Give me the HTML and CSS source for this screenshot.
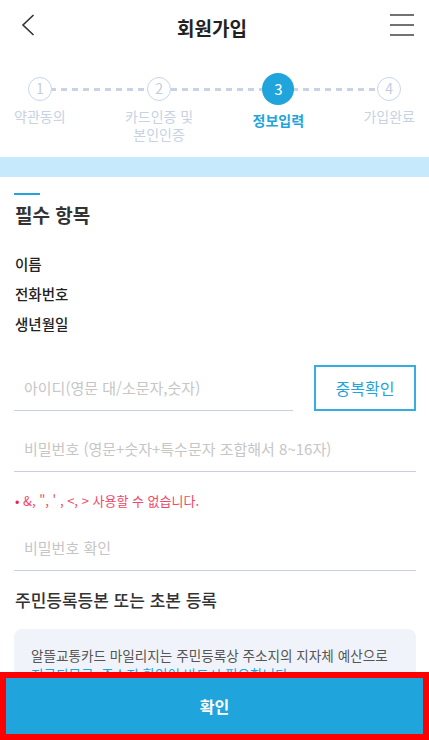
FILE: index.html
```html
<!doctype html>
<html lang="ko">
<head>
  <meta charset="UTF-8">
  <title>회원가입</title>
  <link rel="stylesheet" href="styles.css">
</head>
<body>
<div class="header">
  <a href="#" class="back">
    <svg width="14" height="22" viewBox="0 0 14 22"><path d="M12.5 1 L2 11 L12.5 21" fill="none" stroke="#333" stroke-width="1.6"/></svg>
  </a>
  <h1 class="title">회원가입</h1>
  <a href="#" class="menu">
    <svg width="26" height="22" viewBox="0 0 26 22"><path d="M1 1h24M1 11h24M1 21h24" fill="none" stroke="#444" stroke-width="1.6"/></svg>
  </a>
</div>

<div class="steps">
  <div class="step">
    <div class="dot-wrap"><span class="dot">1</span></div>
    <div class="step-label">약관동의</div>
  </div>
  <div class="step">
    <div class="dot-wrap"><span class="dot">2</span></div>
    <div class="step-label">카드인증 및<br>본인인증</div>
  </div>
  <div class="step on">
    <div class="dot-wrap"><span class="dot">3</span></div>
    <div class="step-label">정보입력</div>
  </div>
  <div class="step">
    <div class="dot-wrap"><span class="dot">4</span></div>
    <div class="step-label">가입완료</div>
  </div>
</div>

<div class="band"></div>

<div class="content">
  <div class="sec-bar"></div>
  <h2 class="sec-title">필수 항목</h2>

  <ul class="info">
    <li>이름</li>
    <li>전화번호</li>
    <li>생년월일</li>
  </ul>

  <div class="row">
    <input class="field" type="text" placeholder="아이디(영문 대/소문자,숫자)">
    <button class="btn-check">중복확인</button>
  </div>
  <div class="row row-pw">
    <input class="field" type="password" placeholder="비밀번호 (영문+숫자+특수문자 조합해서 8~16자)">
  </div>
  <p class="warn"><span class="bullet">•</span> &amp;, ", ' , &lt;, &gt; 사용할 수 없습니다.</p>
  <div class="row">
    <input class="field" type="password" placeholder="비밀번호 확인">
  </div>

  <h3 class="sub-title">주민등록등본 또는 초본 등록</h3>
  <div class="notice">
    알뜰교통카드 마일리지는 주민등록상 주소지의 지자체 예산으로<br>
    <span class="blue">지급되므로, 주소지 확인이 반드시 필요합니다.</span>
  </div>
</div>

<a href="#" class="btn-ok">확인</a>
</body>
</html>
```

FILE: styles.css
```css
* {
  box-sizing: border-box;
}
body {
  margin: 0;
  font-family: "Noto Sans CJK KR", "Noto Sans", sans-serif;
  color: #222;
  background: #fff;
}
.header {
  height: 54px;
  display: flex;
  align-items: center;
  justify-content: space-between;
  padding: 0 14px 0 21px;
}
.header a {
  display: flex;
  margin-bottom: 4px;
}
.title {
  margin: 0;
  font-size: 19px;
  font-weight: 700;
  color: #222;
}
.steps {
  position: relative;
  display: flex;
  justify-content: space-between;
  padding: 19px 14px 0;
}
.steps::before {
  content: "";
  position: absolute;
  left: 39px;
  right: 37px;
  top: 33.5px;
  height: 3px;
  background: repeating-linear-gradient(90deg, #c8d3e7 0 6px, transparent 6px 11px);
}
.step {
  position: relative;
  display: flex;
  flex-direction: column;
  align-items: center;
}
.dot-wrap {
  height: 32px;
  display: flex;
  align-items: center;
}
.dot {
  width: 24px;
  height: 24px;
  border-radius: 50%;
  border: 1.5px solid #c8d5ea;
  background: #fff;
  color: #c3cde0;
  font-size: 14px;
  line-height: 21px;
  text-align: center;
}
.step-label {
  margin-top: 2px;
  font-size: 14px;
  line-height: 18px;
  color: #c8d2e3;
  text-align: center;
}
.step.on .dot {
  width: 32px;
  height: 32px;
  border: none;
  background: #1fa4db;
  color: #fff;
  font-size: 15px;
  line-height: 32px;
}
.step.on .step-label {
  margin-top: 6px;
  color: #1fa4db;
  font-weight: 700;
}
.band {
  height: 20px;
  margin-top: 14px;
  background: #c6eafb;
}
.content {
  padding: 16px 13px 120px 14px;
}
.sec-bar {
  width: 26px;
  height: 2px;
  background: #1fa4db;
}
.sec-title {
  margin: 7px 0 0 1px;
  font-size: 19px;
  line-height: 26px;
  font-weight: 700;
  color: #333;
}
.info {
  list-style: none;
  margin: 21px 0 0 1px;
  padding: 0;
}
.info li {
  font-size: 14.5px;
  line-height: 30px;
  font-weight: 500;
  color: #222;
}
.row {
  display: flex;
  gap: 21px;
  margin-top: 26px;
}
.row-pw {
  margin-top: 15px;
}
.field {
  flex: 1;
  min-width: 0;
  height: 46px;
  border: none;
  border-bottom: 1px solid #c8cfdf;
  padding: 0 10px;
  font-family: inherit;
  font-size: 15px;
  color: #222;
  outline: none;
}
.field::placeholder {
  color: #c6c6c6;
}
.btn-check {
  width: 102px;
  height: 46px;
  border: 2px solid #35ade0;
  background: #fff;
  color: #1fa4db;
  font-family: inherit;
  font-size: 16px;
}
.warn {
  margin: 19px 0 0 1px;
  font-size: 13px;
  line-height: 20px;
  color: #f2476a;
}
.warn .bullet {
  color: #f0203f;
}
.warn + .row {
  margin-top: 14px;
}
.sub-title {
  margin: 17px 0 0 1px;
  font-size: 17px;
  line-height: 24px;
  font-weight: 500;
  color: #333;
}
.notice {
  margin-top: 17px;
  padding: 17px 17px;
  border-radius: 8px;
  background: #f0f4fa;
  font-size: 13.6px;
  line-height: 19px;
  color: #555;
}
.notice .blue {
  color: #1fa4db;
}
.btn-ok {
  position: fixed;
  left: 0;
  right: 0;
  bottom: 0;
  height: 68px;
  border: 6px solid #ff0000;
  background: #1fa4db;
  color: #fff;
  font-size: 16px;
  font-weight: 700;
  text-decoration: none;
  display: flex;
  align-items: center;
  justify-content: center;
}
```
